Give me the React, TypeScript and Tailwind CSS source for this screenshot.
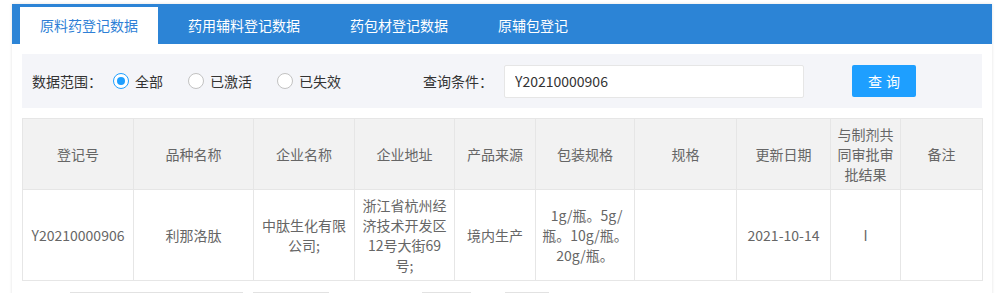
import { useState } from 'react';

const tabs = ['原料药登记数据', '药用辅料登记数据', '药包材登记数据', '原辅包登记'];

const columns = [
    { title: ['登记号'], width: 111 },
    { title: ['品种名称'], width: 120 },
    { title: ['企业名称'], width: 101 },
    { title: ['企业地址'], width: 100 },
    { title: ['产品来源'], width: 81 },
    { title: ['包装规格'], width: 99 },
    { title: ['规格'], width: 102 },
    { title: ['更新日期'], width: 94 },
    { title: ['与制剂共', '同审批审', '批结果'], width: 70 },
    { title: ['备注'], width: 82 },
];

const row: string[][] = [
    ['Y20210000906'],
    ['利那洛肽'],
    ['中肽生化有限', '公司;'],
    ['浙江省杭州经', '济技术开发区', '12号大街69', '号;'],
    ['境内生产'],
    ['\u00a01g/瓶。5g/', '瓶。10g/瓶。', '20g/瓶。'],
    [],
    ['2021-10-14'],
    ['I'],
    [],
];

const Radio = ({ label, checked, onClick }: { label: string; checked: boolean; onClick: () => void }) => (
    <button onClick={onClick} className="flex items-center gap-[6px] text-[14px] text-[#333]">
        <span
            className={
                checked
                    ? 'w-[16px] h-[16px] rounded-full border border-[#1e9fff] flex items-center justify-center bg-white'
                    : 'w-[16px] h-[16px] rounded-full border border-[#c2c2c2] bg-white'
            }
        >
            {checked && <span className="w-[8px] h-[8px] rounded-full bg-[#1e9fff]" />}
        </span>
        {label}
    </button>
);

const App = () => {
    const [activeTab, setActiveTab] = useState(0);
    const [scope, setScope] = useState('全部');
    const [keyword, setKeyword] = useState('Y20210000906');

    return (
        <div className="bg-white min-h-screen pt-[4px] pl-[12px] font-['Noto_Sans_CJK_SC',sans-serif]">
            <div className="w-[980px] bg-white shadow-[0_0_3px_rgba(0,0,0,0.12)] pb-[20px]">
                <div className="h-[40px] bg-[#2c84d6] flex items-end pl-[8px] gap-[10px]">
                    {tabs.map((tab, i) => (
                        <button
                            key={tab}
                            onClick={() => setActiveTab(i)}
                            className={
                                i === activeTab
                                    ? 'h-[37px] px-[20px] bg-white text-[#2f7fd6] text-[14px]'
                                    : 'h-[37px] px-[20px] text-white text-[14px]'
                            }
                        >
                            {tab}
                        </button>
                    ))}
                </div>

                <div className="px-[10px] pt-[10px]">
                    <div className="h-[54px] bg-[#f4f5f9] flex items-center pl-[10px] text-[14px] text-[#333]">
                        <span className="w-[81px]">数据范围：</span>
                        <div className="flex items-center gap-[25px]">
                            {['全部', '已激活', '已失效'].map((s) => (
                                <Radio key={s} label={s} checked={scope === s} onClick={() => setScope(s)} />
                            ))}
                        </div>
                        <span className="ml-[82px] w-[81px]">查询条件：</span>
                        <input
                            value={keyword}
                            onChange={(e) => setKeyword(e.target.value)}
                            className="w-[300px] h-[33px] border border-[#e6e6e6] rounded-[2px] bg-white px-[10px] text-[14px] text-[#333] outline-none"
                        />
                        <button className="ml-[48px] w-[64px] h-[32px] rounded-[2px] bg-[#1e9fff] text-white text-[14px] tracking-[4px] pl-[4px]">
                            查询
                        </button>
                    </div>

                    <table className="mt-[10px] w-[960px] table-fixed border-collapse border border-[#e6e6e6] text-[14px] leading-[20px] text-[#666]">
                        <colgroup>
                            {columns.map((c, i) => (
                                <col key={i} style={{ width: c.width }} />
                            ))}
                        </colgroup>
                        <thead>
                            <tr className="bg-[#f2f2f2] h-[71px]">
                                {columns.map((c, i) => (
                                    <th key={i} className="border border-[#e6e6e6] px-[2px] py-[5px] font-normal text-center align-middle whitespace-nowrap">
                                        {c.title.map((t) => (
                                            <div key={t}>{t}</div>
                                        ))}
                                    </th>
                                ))}
                            </tr>
                        </thead>
                        <tbody>
                            <tr className="h-[91px]">
                                {row.map((lines, i) => (
                                    <td key={i} className="border border-[#e6e6e6] px-[2px] py-[5px] text-center align-middle whitespace-nowrap">
                                        {lines.map((t) => (
                                            <div key={t}>{t}</div>
                                        ))}
                                    </td>
                                ))}
                            </tr>
                        </tbody>
                    </table>

                    <div className="mt-[11px] flex items-center text-[12px] text-[#333]">
                        <div className="ml-[48px] flex h-[28px] border border-[#e2e2e2]">
                            <span className="w-[66px] flex items-center justify-center text-[#d2d2d2]">上一页</span>
                            <span className="w-[38px] flex items-center justify-center bg-[#1e6fd9] text-white">1</span>
                            <span className="w-[67px] flex items-center justify-center text-[#d2d2d2]">下一页</span>
                        </div>
                        <span className="ml-[10px] w-[76px] h-[28px] border border-[#e2e2e2] flex items-center justify-center">共 1 条</span>
                        <span className="ml-[93px] w-[49px] h-[28px] border border-[#e2e2e2] flex items-center justify-center">10条/页</span>
                        <span className="ml-[34px] w-[44px] h-[28px] border border-[#e2e2e2] flex items-center justify-center">1</span>
                    </div>
                </div>
            </div>
        </div>
    );
};

export default App;
